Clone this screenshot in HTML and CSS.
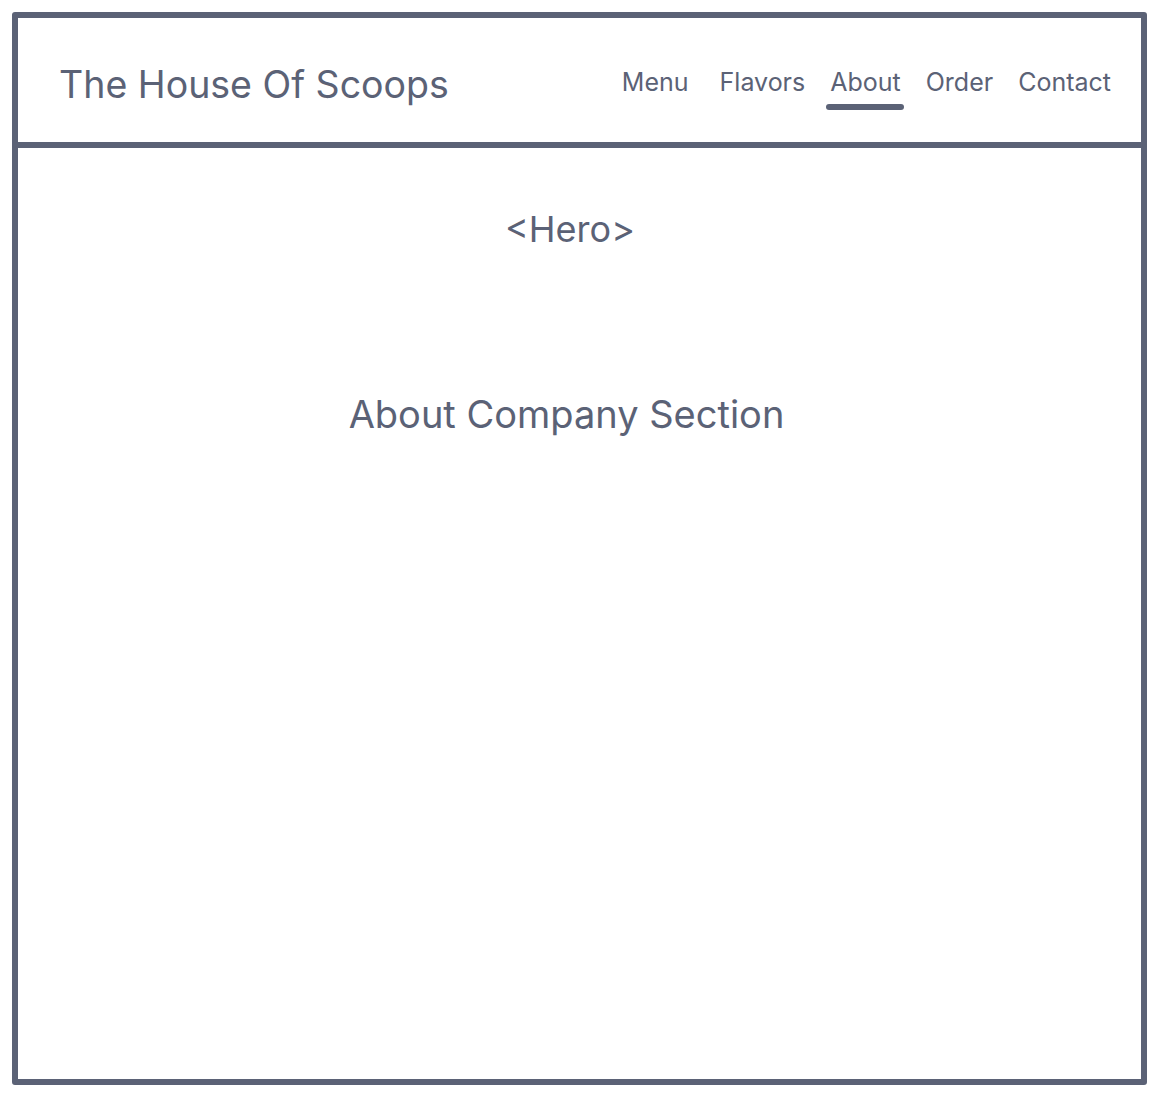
FILE: index.html
```html
<!DOCTYPE html>
<html lang="en">
<head>
<meta charset="utf-8">
<title>The House Of Scoops</title>
<link rel="stylesheet" href="styles.css">
</head>
<body>
<div class="frame">
  <header class="header">
    <div class="brand">The House Of Scoops</div>
    <nav class="nav">
      <a class="nav-item nav-menu">Menu</a>
      <a class="nav-item nav-flavors">Flavors</a>
      <a class="nav-item nav-about active">About</a>
      <a class="nav-item nav-order">Order</a>
      <a class="nav-item nav-contact">Contact</a>
    </nav>
  </header>
  <main class="main">
    <div class="hero">&lt;Hero&gt;</div>
    <div class="about">About Company Section</div>
  </main>
</div>
</body>
</html>
```
FILE: styles.css
```css
html, body {
  margin: 0;
  padding: 0;
  background: #ffffff;
}
body {
  font-family: Inter, "Noto Sans", sans-serif;
  color: #5b6276;
}
.frame {
  box-sizing: border-box;
  margin: 12px;
  width: 1135px;
  height: 1073px;
  border: 6px solid #5b6276;
  border-radius: 3px;
  display: flex;
  flex-direction: column;
}
.header {
  height: 124px;
  border-bottom: 6px solid #5b6276;
  display: flex;
  align-items: center;
  justify-content: space-between;
  padding: 0 30px 0 41px;
}
.brand {
  font-size: 37.5px;
  margin-top: 8px;
}
.nav {
  display: flex;
  align-items: center;
  gap: 25px;
  margin-top: 4px;
}
.nav-item {
  font-size: 25px;
  position: relative;
  padding: 4px 0;
}
.nav-menu { margin-right: 6px; }
.active::after {
  content: "";
  position: absolute;
  left: -4px;
  right: -3px;
  bottom: -9px;
  height: 6px;
  border-radius: 3px;
  background: #5b6276;
}
.main {
  flex: 1;
  display: flex;
  flex-direction: column;
  align-items: center;
  padding-right: 19px;
}
.hero {
  font-size: 36px;
  margin-top: 59px;
}
.about {
  font-size: 38px;
  margin-top: 140px;
  margin-right: 7px;
}
```
